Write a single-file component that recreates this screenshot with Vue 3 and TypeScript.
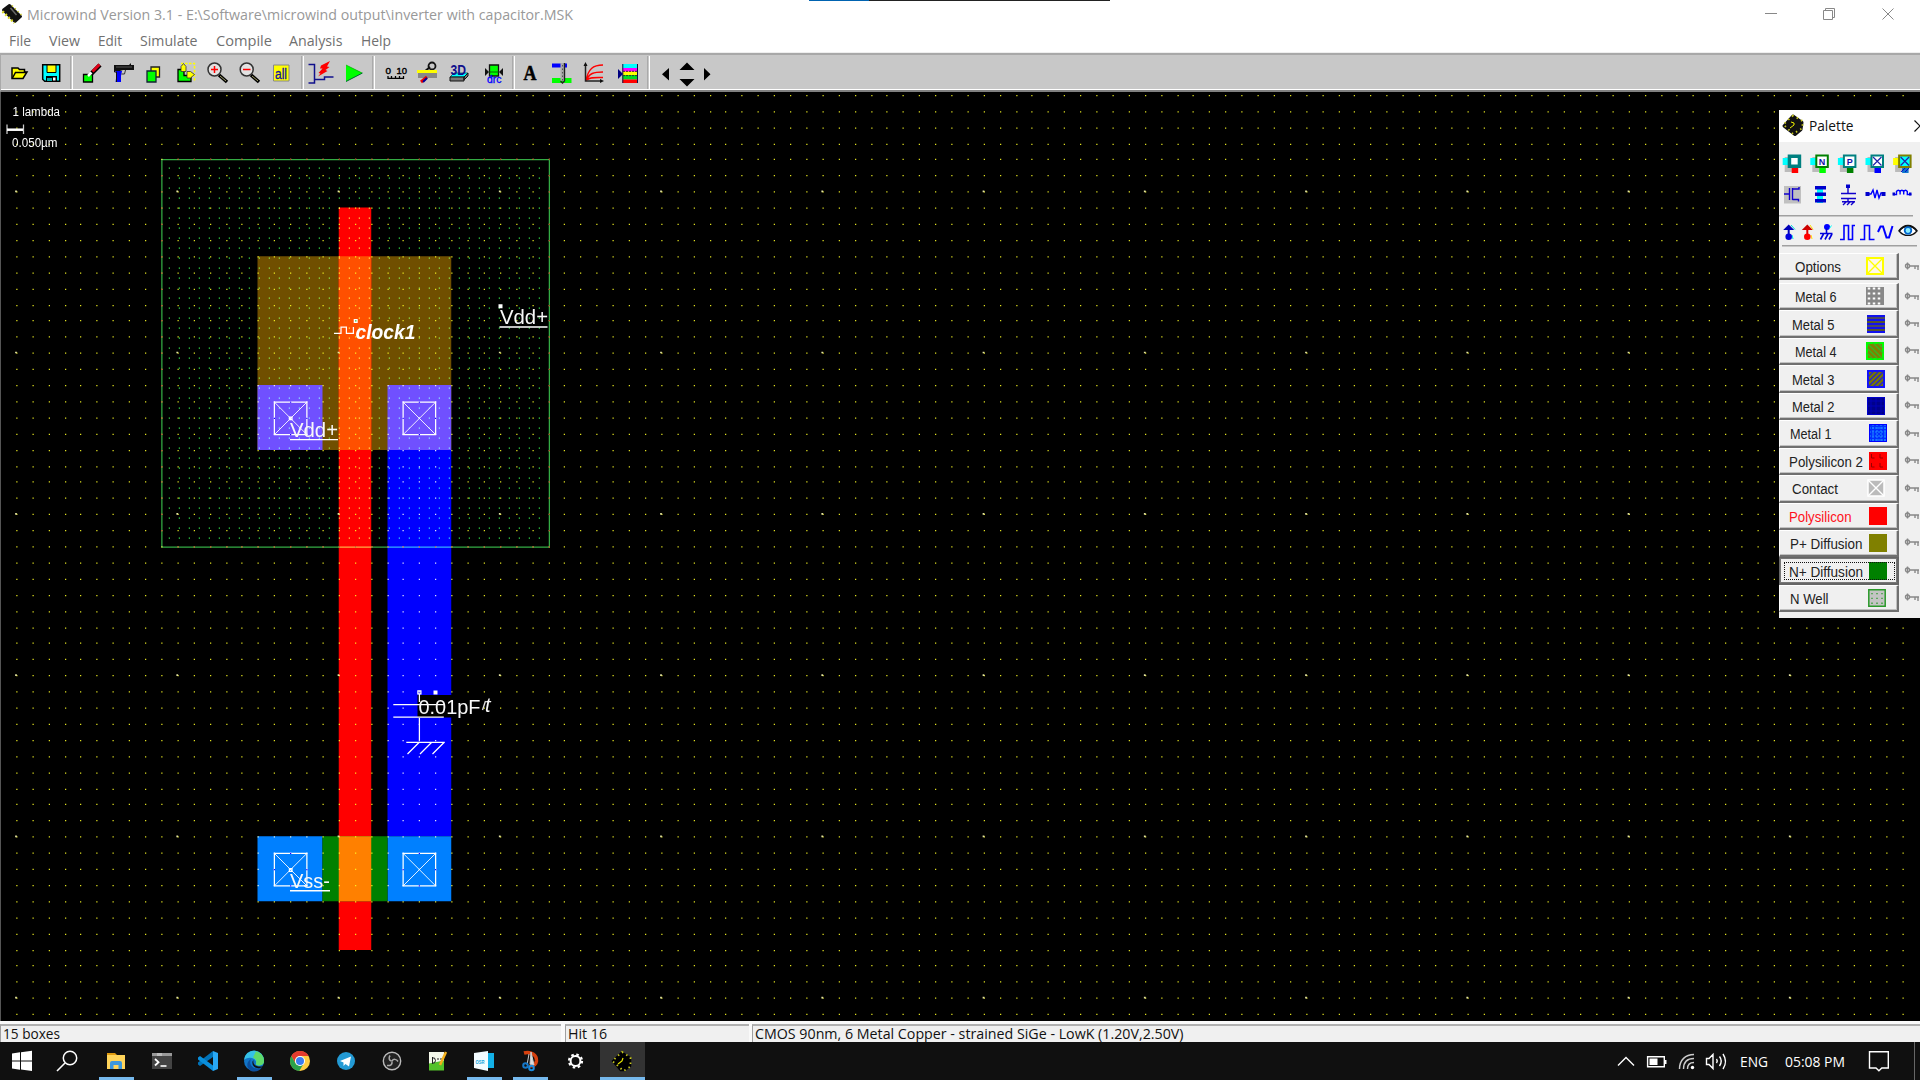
<script setup lang="ts">
import { h } from 'vue'

interface LabelProps {
  t: string
  w: number
  s?: number
  c?: string
  f?: string
  h?: number
  b?: number
}

// Single-line label drawn at an exact width
const Label = (p: LabelProps) =>
  h('svg', { width: p.w + 2, height: p.h ?? 20, style: 'display:block;overflow:visible;flex:none' }, [
    h(
      'text',
      {
        x: 0,
        y: p.b ?? 15,
        textLength: p.w,
        lengthAdjust: 'spacingAndGlyphs',
        'font-size': p.s ?? 14.5,
        'font-family': p.f ?? '"Open Sans", "Noto Sans", sans-serif',
        fill: p.c ?? '#111',
      },
      p.t,
    ),
  ])
Label.props = ['t', 'w', 's', 'c', 'f', 'h', 'b']

const arial = '"Liberation Sans", Arial, sans-serif'

const menus = [
  { t: 'File', x: 9, w: 22 },
  { t: 'View', x: 49, w: 31 },
  { t: 'Edit', x: 98, w: 24 },
  { t: 'Simulate', x: 140, w: 57.5 },
  { t: 'Compile', x: 215.5, w: 56 },
  { t: 'Analysis', x: 289, w: 53.5 },
  { t: 'Help', x: 360.5, w: 30 },
].map((m, i, a) => ({ ...m, gap: i ? m.x - a[i - 1].x - a[i - 1].w - 2 : m.x }))

const cols = Array.from({ length: 118 }, (_, k) => Math.floor(13.355 + 12.899 * k))
const rows = Array.from({ length: 58 }, (_, k) => Math.floor(76.355 + 12.899 * k))
const dots = (xs: number[], ys: number[], s = 1) =>
  ys.map((y) => xs.map((x) => `M${x} ${y}h${s}v${s}h-${s}z`).join('')).join('')
const gridPath = dots(cols, rows)
const majorPath = dots(
  Array.from({ length: 12 }, (_, k) => 12.1 + 129 * k),
  Array.from({ length: 6 }, (_, k) => 152.3 + 129 * k),
  1.4,
)
const wellPath = dots(
  Array.from({ length: 38 }, (_, k) => 135 + 8 * k),
  Array.from({ length: 38 }, (_, k) => 134 + 8 * k),
)
const edgeCols = cols.filter((x) => x > 129 && x < 440)
const edgeRows = rows.filter((y) => y > 127 && y < 437)
const wellEdge = dots(edgeCols, [127, 437]) + dots([129, 439], edgeRows)

const contacts = [
  [219.5, 321.7],
  [322.5, 321.7],
  [219.5, 682.7],
  [322.5, 682.7],
]

const layers = [
  { t: 'Metal 6', x: 1794.5, w: 41.5, sx: 1866, k: 'm6' },
  { t: 'Metal 5', x: 1791.5, w: 42.5, sx: 1867, k: 'm5' },
  { t: 'Metal 4', x: 1794.5, w: 41.5, sx: 1866, k: 'm4' },
  { t: 'Metal 3', x: 1791.5, w: 42.5, sx: 1867, k: 'm3' },
  { t: 'Metal 2', x: 1791.5, w: 42.5, sx: 1867, k: 'm2' },
  { t: 'Metal 1', x: 1790, w: 41.5, sx: 1869, k: 'm1' },
  { t: 'Polysilicon 2', x: 1788.5, w: 74, sx: 1869, k: 'p2' },
  { t: 'Contact', x: 1791.5, w: 46, sx: 1867, k: 'ct' },
  { t: 'Polysilicon', x: 1788.5, w: 62.5, sx: 1869, k: 'po', c: '#ff1020' },
  { t: 'P+ Diffusion', x: 1790, w: 72.5, sx: 1869, k: 'pd' },
  { t: 'N+ Diffusion', x: 1788.5, w: 74, sx: 1869, k: 'nd', active: true },
  { t: 'N Well', x: 1790, w: 38.5, sx: 1868, k: 'nw' },
]
</script>

<template>
  <div class="screen">
    <header class="title">
      <svg width="27" height="28" viewBox="0 0 27 28">
        <path d="M3.500 10 9.500 5.500 20.500 16.500 15 21.500z" fill="#111" stroke="#111" stroke-width="3" stroke-linejoin="round" />
        <path d="m10.500 8 6 7" stroke="#666" stroke-width="1.5" />
        <path d="M12 5.500l10 10" stroke="#c8c820" stroke-width="1.5" stroke-dasharray="1.300 2.700" fill="none" />
        <path d="M2.500 11.500l12 11.500" stroke="#d8d820" stroke-width="2.5" stroke-dasharray="1.800 2.200" fill="none" />
      </svg>
      <Label t="Microwind Version 3.1 - E:\Software\microwind output\inverter with capacitor.MSK" :w="546" :s="15" c="#999" :h="28" :b="20" />
      <svg class="controls" width="160" height="28" viewBox="1760 0 160 28" fill="none" stroke="#888" stroke-width="1">
        <path d="M1765 13.500h12M1823.500 10.500h9v9h-9zM1825.500 10.500v-2h9v9h-2M1882.500 8.500l11 11M1893.500 8.500l-11 11" />
      </svg>
      <div class="peek"><i></i></div>
    </header>

    <nav class="menu">
      <div v-for="m in menus" :key="m.t" :style="{ marginLeft: m.gap + 'px' }">
        <Label :t="m.t" :w="m.w" :s="14.5" c="#707070" :h="24" :b="18" />
      </div>
    </nav>

    <div class="toolbar">
      <svg width="34" height="35" viewBox="1 55 34 35">
        <path d="M12 68h6l1.500 1.500h5V72h2.500l-4 6.500H12z" fill="#ff0" stroke="#000" stroke-width="1.5" />
        <path d="M12.500 78 15.500 72.500h11" stroke="#000" stroke-width="1.5" fill="none" />
      </svg>
      <svg width="35" height="35" viewBox="35 55 35 35">
        <path d="M42.700 64.700h17v16.600h-15l-2-2z" fill="#0ff" stroke="#000" stroke-width="1.5" />
        <path d="M47 65h9v7.500h-9z" fill="#ff0" stroke="#000" />
        <path d="M46 76h11v5H46z" fill="#000" /><path d="M53 77.500h2.500v3H53z" fill="#fff" /><path d="M47 78h5v3h-5z" fill="#0aa" />
      </svg>
      <i class="sep"></i>
      <svg width="35" height="35" viewBox="73 55 35 35">
        <path d="M83.500 74.500h9v7.500h-9z" fill="#0f0" stroke="#000" stroke-width="1.3" />
        <path d="m91.500 73.500 8.500-8.500" stroke="#000" stroke-width="4.5" /><path d="m92.500 71.500 7-7" stroke="#e00018" stroke-width="3" />
        <path d="m88 76 3.500-3.500" stroke="#fff" stroke-width="2.5" />
      </svg>
      <svg width="33" height="35" viewBox="108 55 33 35">
        <path d="M114 65h15l2-2v2h3v5h-11l-3 1h-6z" fill="#111" />
        <path d="M115.500 71h6.500l-1 5v6h-5.500l1-7z" fill="#00f" /><path d="M114.500 69v3h2v10" fill="none" stroke="#111" /><path d="M121.500 74h3l1-4" stroke="#333" fill="none" /><path d="M116 67h16" stroke="#555" />
      </svg>
      <svg width="31" height="35" viewBox="141 55 31 35">
        <path d="M151 67h8.500v10H151z" fill="#ff0" stroke="#222" stroke-width="1.3" /><path d="M147 71h9v11h-9z" fill="#0f0" stroke="#123" stroke-width="1.3" />
      </svg>
      <svg width="29" height="35" viewBox="172 55 29 35">
        <path d="M181 63.500h13.500v17" fill="none" stroke="#ff0" stroke-width="1.5" stroke-dasharray="2.500 1.500" />
        <path d="M178 69.500h6v6h7v6h-13z" fill="#0f0" stroke="#000" stroke-width="1.3" />
        <path d="M183.500 63.500l2.500 3v5h-5v-5z" fill="#ff0" stroke="#333" stroke-width=".8" /><path d="M187 71.500h3.500l4 3-4 3.500h-3.500z" fill="#ff0" stroke="#333" stroke-width=".8" />
      </svg>
      <svg width="33" height="35" viewBox="201 55 33 35">
        <path d="m219 75 8 7" stroke="#000" stroke-width="3.5" /><path d="m220 76 6 5" stroke="#cc8" stroke-width=".8" />
        <circle cx="214.5" cy="69.5" r="6.5" fill="#e2e2e2" stroke="#333" stroke-width="1.5" />
        <path d="M211 69.500h7M214.500 66v7" stroke="#f00" stroke-width="1.5" />
      </svg>
      <svg width="33" height="35" viewBox="234 55 33 35">
        <path d="m251 75 8 7" stroke="#000" stroke-width="3.5" /><path d="m252 76 6 5" stroke="#cc8" stroke-width=".8" />
        <circle cx="246.7" cy="69.5" r="6.5" fill="#e2e2e2" stroke="#333" stroke-width="1.5" />
        <path d="M243 69.500h7.500" stroke="#f00" stroke-width="1.5" />
      </svg>
      <svg width="34" height="35" viewBox="267 55 34 35">
        <path d="M273.500 65h15.500v16h-15.500z" fill="#ff0" stroke="#888" />
        <text x="275" y="78.5" font-size="14" textLength="12" lengthAdjust="spacingAndGlyphs" font-family="Liberation Sans, sans-serif" fill="#1111a0" stroke="#1111a0" stroke-width=".3">all</text>
      </svg>
      <i class="sep"></i>
      <svg width="34" height="35" viewBox="304 55 34 35">
        <path d="M308.500 64.500h6v18.500h-6M314.500 79.500h10v-2.500h9" fill="none" stroke="#10108c" stroke-width="1.5" />
        <path d="m330 61-9 4.500-1 3 2.500 0-4 4.500 2 .5-2.500 3 9.500-5.500-2-1 4-3-2.500-.5z" fill="#f00" />
      </svg>
      <svg width="34" height="35" viewBox="338 55 34 35"><path d="M346 65v16.500l16.500-8.500z" fill="#0f0" /><path d="m346 65 16 8" stroke="#0a0" stroke-width=".7" /><path d="m346 81.500 16.500-8.500" stroke="#063" /></svg>
      <i class="sep"></i>
      <svg width="35" height="35" viewBox="375 55 35 35">
        <text x="385.5" y="74.3" font-size="9.5" textLength="5.5" lengthAdjust="spacingAndGlyphs" font-family="Liberation Sans, sans-serif" fill="#000" stroke="#000" stroke-width=".4">0</text>
        <text x="396.5" y="74.3" font-size="9.5" textLength="10.5" lengthAdjust="spacingAndGlyphs" font-family="Liberation Sans, sans-serif" fill="#000" stroke="#000" stroke-width=".4">10</text>
        <path d="M388 76v2.300h15.500V76M391.500 78v-2M395.500 78v-2M399.500 78v-2" fill="none" stroke="#000" stroke-width="1.3" />
      </svg>
      <svg width="32" height="35" viewBox="410 55 32 35">
        <circle cx="432" cy="66" r="3.5" fill="none" stroke="#111" stroke-width="1.8" /><path d="m430 67-6 5" stroke="#111" stroke-width="2" />
        <path d="M417 70h20v3h-20z" fill="#ff0" /><path d="M418 73h19v5h-19z" fill="#888" /><path d="m427 77-6 5" stroke="#e00" stroke-width="3" /><path d="m427 78-4 4" stroke="#009" stroke-width="2" />
      </svg>
      <svg width="34" height="35" viewBox="442 55 34 35">
        <path d="M450 77l4-4h14l-4 4z" fill="#0ff" stroke="#055" stroke-width=".8" /><path d="M450 77h14v4h-14zM464 77l4-4v3l-4 4z" fill="#777" stroke="#111" />
        <text x="450.5" y="75" font-size="15" textLength="15.5" lengthAdjust="spacingAndGlyphs" font-weight="700" font-family="Liberation Sans, sans-serif" fill="#10108c">3D</text>
      </svg>
      <svg width="36" height="35" viewBox="476 55 36 35">
        <path d="M489.500 65h9v11h-9z" fill="#0f0" stroke="#111" stroke-width="1.3" /><path d="M485 68v8l4-4zM503 68v8l-4-4z" fill="#111" /><path d="M489 72h10" stroke="#060" />
        <text x="487" y="82.5" font-size="10.5" textLength="14.5" lengthAdjust="spacingAndGlyphs" font-family="Liberation Sans, sans-serif" fill="#00f" stroke="#00f" stroke-width=".3">drc</text>
      </svg>
      <i class="sep"></i>
      <svg width="28" height="35" viewBox="515 55 28 35"><text x="523.5" y="80" font-size="20" textLength="13" lengthAdjust="spacingAndGlyphs" font-weight="700" font-family="Liberation Serif, serif" fill="#000" stroke="#000" stroke-width=".5">A</text></svg>
      <svg width="34" height="35" viewBox="543 55 34 35">
        <path d="M552 63.500h15v4h-15z" fill="#00f" /><path d="M552 78h19.500v5H552z" fill="#0f0" /><path d="M560.500 63h4v18h-4z" fill="#aaa" /><path d="M564.500 63v18l-2 2-2-2" fill="none" stroke="#222" stroke-width="1.4" /><path d="M562.500 65v16" stroke="#555" stroke-dasharray="1.500 2" />
      </svg>
      <svg width="35" height="35" viewBox="577 55 35 35">
        <path d="M586 81c2-12 7-16 17-16M586 81c3-8 8-9 17-9M587 80c3-3 8-2.500 16-2.500" fill="none" stroke="#f00" stroke-width="1.4" /><path d="M585.500 64v17H602" fill="none" stroke="#222" stroke-width="1.5" /><path d="M583.500 66l2-4 2 4zM600 79l4 2-4 2z" fill="#111" />
      </svg>
      <svg width="35" height="35" viewBox="612 55 35 35">
        <path d="M622.500 64h15v4h-15z" fill="#0ff" /><path d="M622.500 68h15v4h-15z" fill="#f0f" /><path d="M622.500 71.500h15v4h-15z" fill="#ff0" /><path d="M622.500 75h15v4.500h-15z" fill="#0d2" /><path d="M622.500 79.500h15v3.500h-15z" fill="#f00" />
        <path d="M622.800 64v19M637.500 64v19" stroke="#114" /><path d="M623 71.300h14M623 75.600h14" stroke="#333" stroke-dasharray="2 1" /><path d="M618 69v10l5-5z" fill="#000080" />
      </svg>
      <i class="sep"></i>
      <svg width="80" height="35" viewBox="650 55 80 35"><path d="M669 68v12.500l-7-6.200zM704 68v12.500l6.500-6.200zM679.500 70h15l-7.500-7.500zM679.500 79h15l-7.500 7.500z" fill="#000" /></svg>
    </div>

    <main class="workspace">
      <svg class="layout" width="1920" height="929" viewBox="0 92 1920 929">
        <rect y="92" width="1920" height="929" fill="#000" />
        <g transform="scale(1.25)">
          <path d="M206 205h155v155H206z" fill="#704f00" />
          <path d="M271 166h26v594h-26z" fill="#f00" />
          <path d="M271 205h26v155h-26z" fill="#ff5000" />
          <path d="M310 360h51v309h-51z" fill="#00f" />
          <path d="M206 308h52v52h-52zM310 308h51v52h-51z" fill="#7050ff" />
          <path d="M206 669h52v52h-52zM310 669h51v52h-51z" fill="#0080ff" />
          <path d="M258 669h52v52h-52z" fill="#008000" />
          <path d="M271 669h26v52h-26z" fill="#ff8000" />
          <path d="M129.500 127.700h310v310h-310z" fill="none" stroke="#34ac44" style="mix-blend-mode: screen" />
          <path :d="gridPath" fill="#e0e020" style="mix-blend-mode: screen" />
          <path :d="majorPath" fill="#e4e4a4" />
          <path :d="wellPath" fill="#30d848" style="mix-blend-mode: screen" />
          <path :d="wellEdge" fill="#a03a30" />
          <g v-for="(c, i) in contacts" :key="i" :transform="`translate(${c[0]} ${c[1]})`" fill="none" stroke="#fff">
            <path d="M0 0h26v26H0z" /><path d="m0 0 26 26M26 0 0 26" stroke-width=".7" />
            <path d="M12.500 0h1M12.500 26h1M-.5 13h1M25.500 13h1" stroke="#20f" />
          </g>
          <rect x="334" y="556" width="50" height="18" fill="#000" />
        </g>
        <g fill="none" stroke="#fff" stroke-width="1.25">
          <path d="M334 333.400h7v-6.300h5.400v6.300h7v-6.300" />
          <path d="M393.300 704.600h51M393.300 717h50.500M419.400 694v8M419.400 718v22M406.300 742.400h38.500M419 742.500l-11.500 11.500M431.500 742.500 420 754M444 742.500 432.500 754" />
          <path d="M499.500 327h48M290 439.600h48M290 890.700h40" stroke-width="1.4" />
          <path d="M417.900 690.900h3v3h-3zM289.400 417h2.600v2.600h-2.600zM289.400 868.700h2.600v2.600h-2.600z" />
        </g>
        <path d="M433.500 690.500h4v4h-4zM353.700 319h4v4h-4zM498.500 304.200h4v4h-4z" fill="#fff" />
        <path d="M355.200 320.300h1.200v1.200h-1.200z" fill="#0a0" />
        <g fill="#f8f8f8" font-family="Liberation Sans, Arial, sans-serif" font-size="20">
          <text x="355.5" y="338.7" textLength="60" lengthAdjust="spacingAndGlyphs" font-weight="700" font-style="italic" fill="#fff">clock1</text>
          <text x="500" y="324" textLength="48" lengthAdjust="spacingAndGlyphs">Vdd+</text>
          <text x="290" y="436.5" textLength="48" lengthAdjust="spacingAndGlyphs">Vdd+</text>
          <text x="290" y="888" textLength="40" lengthAdjust="spacingAndGlyphs">Vss-</text>
          <text x="418.5" y="713.8" textLength="62" lengthAdjust="spacingAndGlyphs">0.01pF</text>
          <text x="485" y="711.5" font-style="italic" font-size="20">t</text>
          <path d="m482.500 710 3-9" stroke="#ddd" stroke-width="1.4" />
          <text x="12.5" y="115.6" font-size="12" textLength="47.5" lengthAdjust="spacingAndGlyphs" fill="#fff">1 lambda</text>
          <text x="12" y="146.6" font-size="12" textLength="45.5" lengthAdjust="spacingAndGlyphs" fill="#fff">0.050µm</text>
        </g>
        <path d="M7 124.500v9.500M23.500 124.500v9.500" stroke="#ccc" stroke-width="1.25" /><path d="M7 129.700h16" stroke="#fff" stroke-width="2.5" />
      </svg>

      <aside class="palette">
        <div class="ptitle">
          <svg width="30" height="32" viewBox="1779 110 30 32">
            <path d="m1793 116 9 6.500-1 7-6 5-11-8.500z" fill="#111" stroke="#111" stroke-width="3" stroke-linejoin="round" />
            <path d="m1793 115.500-9.500 9 9.500 9.500 9.500-6v-7z" fill="none" stroke="#c8c820" stroke-width="1.8" stroke-dasharray="1.500 3.500" />
            <path d="m1790 128 4-3v-2l-3-1" stroke="#ee0" stroke-width="1" fill="none" />
          </svg>
          <Label t="Palette" :w="44.5" :s="15" c="#111" :h="32" :b="20.5" />
          <svg class="pclose" width="12" height="32" viewBox="1908 110 12 32"><path d="m1914.500 120.500 11 11M1925.500 120.500l-11 11" stroke="#111" stroke-width="1.2" /></svg>
        </div>
        <svg width="141" height="71" viewBox="1779 142 141 71">
          <g v-for="(g, i) in [['#0ff', '#008080', '#f00'], ['#0ff', '#008000', '#0f0'], ['#0ff', '#008080', '#008000'], ['#0ff', '#008080', '#00f'], ['#ff0', '#808000', '#17c']]" :key="i" :transform="`translate(${1782.7 + 27.6 * i} 154)`">
            <path d="M2 3h13v15H2z" fill="#bbb" /><path d="M0 4h6v7H0z" :fill="g[0]" /><path d="M9 13h6.500v6H9z" :fill="g[2]" />
            <path d="M5 .5h13.500v13.500H5z" :fill="g[1]" />
            <path v-if="i === 0" d="M8.500 4h6.500v6.500H8.500z" fill="#fff" />
            <path v-else d="M7 2.500h9.500v9.500H7z" :fill="i === 4 ? '#0ff' : '#fff'" />
            <path v-if="i > 2" d="m7.500 3 8.500 8.500M16 3l-8.500 8.500" stroke="#22a" stroke-width="1.2" />
            <text v-if="i === 1" x="8.5" y="10.5" font-size="9" font-weight="700" font-family="Liberation Sans, sans-serif" fill="#11a">N</text>
            <text v-if="i === 2" x="8.8" y="10.5" font-size="9" font-weight="700" font-family="Liberation Sans, sans-serif" fill="#11a">P</text>
            <path v-if="i === 4" d="m8 18 4-4M12 18l4-4" stroke="#00c" />
          </g>
          <path d="M1784 186h17v17.500h-17z" fill="#c0c0c0" />
          <g fill="none" stroke="#10c" stroke-width="1.4">
            <path d="M1784 194h5.500M1789.500 188v12M1792.500 188v12M1799 187v2h-6M1792.500 199.500h6v2" />
            <path d="M1848 186v7M1841 193.500h15M1841 198.500h15M1848 198.500v4M1842 201.700h13M1846 202l-3 3M1850 202l-3 3M1854 202l-3 3" />
            <path d="M1867 194h4l2-4 2 8 2-8 2 8 2-5h4" stroke="#00f" /><path d="M1893 194.500h3.500v-3q1.800-2.500 3.600 0v3-3q1.800-2.500 3.600 0v3-3q1.800-2.500 3.600 0v3h4" stroke="#00f" />
          </g>
          <path d="M1817 187h6v16h-6z" fill="#0ff" /><path d="M1815 186h11v3.500h-11zM1815 192.500h11v3.500h-11zM1815 199h11v3.500h-11zM1846 184.500h4v3.500h-4zM1865.500 192h4v4h-4zM1881.500 192h4v4h-4zM1892.500 192.500h2.500v3h-2.500zM1909 192.500h2.500v3h-2.500z" fill="#00c" />
        </svg>
        <i class="rule first"></i>
        <svg width="141" height="29" viewBox="1779 217 141 29">
          <path d="M1791 225l4 4.500M1792 235l1 4" stroke="#0dd" />
          <path d="m1788.700 224.500 5.500 5.500h-11z" fill="#0000b8" /><path d="M1788.700 228v10" stroke="#0000b8" stroke-width="2" /><circle cx="1788.7" cy="236.7" r="3.3" fill="#00d" />
          <path d="M1810 225l3 4.500M1811 235l1 4" stroke="#fd0" />
          <path d="m1807.300 224.500 5.500 5.500h-11z" fill="#c00" /><path d="M1807.300 228v10" stroke="#d00" stroke-width="2" /><circle cx="1807.3" cy="236.7" r="3.3" fill="#f00" />
          <circle cx="1827" cy="227" r="3" fill="#00f" /><path d="M1829.500 228.500l2-3" stroke="#0ff" /><path d="M1826.500 228v6M1820 233.500h12.500M1823.500 234l-3 5.500M1828 234l-3 5.500M1832 234l-3 5.500" stroke="#00d" stroke-width="1.6" fill="none" />
          <g fill="none" stroke="#00f" stroke-width="1.6"><path d="M1840 239.500h4v-14h4.500v14h4v-14h2.500" /><path d="M1860 239.500h4.500v-14h5v14h5" /><path d="M1878 232l2.500-5.500h2.500l3.500 11h2.500l3.500-11.500" stroke-width="2" /></g>
          <path d="M1899 231c5-6 13-6 18 0-5 6-13 6-18 0z" fill="#fff" stroke="#111" stroke-width="1.2" /><path d="M1899 231c5-7 13-7 18 0" fill="none" stroke="#111" stroke-width="1.8" /><circle cx="1908" cy="230.5" r="3.3" fill="#8ef" stroke="#06c" stroke-width="1.8" />
        </svg>
        <i class="rule second"></i>
        <div class="row options">
          <div class="btn">
            <div :style="{ width: '14.5px' }"></div>
            <Label t="Options" :w="46" :s="14" c="#222" :f="arial" :h="22" :b="16.8" />
            <svg class="swatch" width="18" height="18" viewBox="0 0 18 18" :style="{ marginRight: '13.5px' }"><path d="M1 1h16v16H1z" fill="#fff8e8" stroke="#ff0" stroke-width="2" /><path d="m1 1 16 16M17 1 1 17" stroke="#ff0" stroke-width="1.3" /></svg>
          </div>
          <svg class="key" width="16" height="10" viewBox="0 0 16 10"><circle cx="3.5" cy="5" r="2" fill="none" stroke="#888" stroke-width="1.4" /><path d="M5.500 5h9.500M11 5v3M14 5v4M3.500 1.500v7" stroke="#888" stroke-width="1.4" /></svg>
        </div>
        <div v-for="l in layers" :key="l.t" class="row">
          <div class="btn" :class="{ active: l.active }">
            <i v-if="l.active" class="focus"></i>
            <div :style="{ width: l.x - 1780 + 'px', flex: 'none' }"></div>
            <Label :t="l.t" :w="l.w" :s="14" :c="l.c ?? '#222'" :f="arial" :h="22" :b="16.8" />
            <svg class="swatch" width="18" height="18" viewBox="0 0 18 18" :style="{ marginRight: 1897 - l.sx - 18 + 'px' }">
              <template v-if="l.k === 'm6'"><path d="M0 0h18v18H0z" fill="#888" /><path d="M3 .5v18M8 .5v18M13 .5v18" stroke="#fff" stroke-width="2.5" stroke-dasharray="2 3" /></template>
              <template v-else-if="l.k === 'm5'"><path d="M0 0h18v18H0z" fill="#4a4a60" /><path d="M0 1h18M0 5h18M0 9h18M0 13h18M0 17h18" stroke="#11e" stroke-width="1.8" /><path d="M0 7h18M0 15h18" stroke="#606000" /></template>
              <template v-else-if="l.k === 'm4'"><path d="M1 1h16v16H1z" fill="#808000" stroke="#0f0" stroke-width="2" /><path d="m1 11 6 6M1 6l11 11M2 2l15 15M7 1l10 10M12 1l5 5" stroke="#3b2" stroke-width="1.2" /></template>
              <template v-else-if="l.k === 'm3'"><path d="M1 1h16v16H1z" fill="#777700" stroke="#11f" stroke-width="2" /><path d="m1 7 6-6M1 12 12 1M1 17 17 1M6 17 17 6M11 17l6-6" stroke="#22c" stroke-width="1.2" /></template>
              <template v-else-if="l.k === 'm2'"><path d="M0 0h18v18H0z" fill="#00008b" /><path d="M0 4h18M0 9h18M0 14h18M4 0v18M9 0v18M14 0v18" stroke="#0000b8" /><path d="M.5.5h17v17H.5z" fill="none" stroke="#00c" /></template>
              <template v-else-if="l.k === 'm1'"><path d="M0 0h18v18H0z" fill="#0030ff" /><path d="M0 4h18M0 8h18M0 12h18M0 16h18M4 0v18M8 0v18M12 0v18M16 0v18" stroke="#2090ff" stroke-dasharray="2 1" /><path d="M.5.5h17v17H.5z" fill="none" stroke="#00f" /></template>
              <template v-else-if="l.k === 'p2'"><path d="M0 0h18v18H0z" fill="#f00" /><path d="M2.500 2v4h3M11 2v4h3M2.500 11v4h3M11 11v4h3" stroke="#900" fill="none" /></template>
              <template v-else-if="l.k === 'ct'"><path d="M1 1h16v16H1z" fill="#bbb" stroke="#fff" stroke-width="1.5" /><path d="m1 1 16 16M17 1 1 17" stroke="#fff" stroke-width="1.4" /></template>
              <path v-else-if="l.k === 'po'" d="M0 0h18v18H0z" fill="#f00" />
              <path v-else-if="l.k === 'pd'" d="M0 0h18v18H0z" fill="#808000" />
              <path v-else-if="l.k === 'nd'" d="M0 0h18v18H0z" fill="#008000" />
              <template v-else><path d="M.8.800h16.400v16.400H.8z" fill="#c4c4c4" stroke="#2a9a2a" stroke-width="1.5" /><path d="M4 4v12M9 4v12M14 4v12" stroke="#2a9a2a" stroke-width="1.3" stroke-dasharray="1.3 3.5" /></template>
            </svg>
          </div>
          <svg class="key" width="16" height="10" viewBox="0 0 16 10"><circle cx="3.5" cy="5" r="2" fill="none" stroke="#888" stroke-width="1.4" /><path d="M5.500 5h9.500M11 5v3M14 5v4M3.500 1.500v7" stroke="#888" stroke-width="1.4" /></svg>
        </div>
      </aside>
    </main>

    <footer class="status">
      <div class="cell a"><Label t="15 boxes" :w="57" :s="14.5" :h="18" :b="15" /></div>
      <div class="cell b"><Label t="Hit 16" :w="39" :s="14.5" :h="18" :b="15" /></div>
      <div class="cell c"><Label t="CMOS 90nm, 6 Metal Copper - strained SiGe - LowK (1.20V,2.50V)" :w="428.5" :s="14.5" :h="18" :b="15" /></div>
    </footer>

    <div class="taskbar">
      <svg width="45" height="38" viewBox="0 1042 45 38"><path d="M12 1053.500l8-1.200v8.200h-8zM21 1052.200l11-1.500v9.800H21zM12 1061.500h8v8.200l-8-1.200zM21 1061.500h11v9.500l-11-1.400z" fill="#fff" /></svg>
      <svg width="46" height="38" viewBox="45 1042 46 38"><circle cx="70" cy="1058" r="6.7" fill="none" stroke="#fff" stroke-width="1.5" /><path d="m65 1063-8 8" stroke="#fff" stroke-width="1.6" /></svg>
      <svg width="46" height="38" viewBox="93 1042 46 38"><path d="M107 1053h8l2 2h-10z" fill="#e09b10" /><path d="M107 1055h18v14h-18z" fill="#ffd45a" /><path d="M110 1069v-6q0-2 2-2h8q2 0 2 2v6h-3.500v-4h-5v4z" fill="#3c97dd" /><path d="M99 1077h35v3h-35z" fill="#76b9ed" /></svg>
      <svg width="46" height="38" viewBox="139 1042 46 38"><path d="M152 1053h20v16h-20z" fill="#444" /><path d="M152 1053h20v3h-20z" fill="#999" /><path d="M157 1053h5v3h-5z" fill="#bbb" /><path d="m155 1059 3.500 3.200-3.500 3.300" fill="none" stroke="#fff" stroke-width="1.8" /><path d="M160.500 1066h6" stroke="#fff" stroke-width="1.6" /></svg>
      <svg width="46" height="38" viewBox="185 1042 46 38"><path d="m213 1051 5 2v16l-5 2z" fill="#29a8f5" /><path d="M213 1051v6l-13 9-2-1.500v-2z" fill="#0072b8" /><path d="m198 1057.500 2-1.500 13 9.500v5.500l-15-11.500z" fill="#0a8fdc" /></svg>
      <svg width="46" height="38" viewBox="231 1042 46 38"><circle cx="254" cy="1061" r="10" fill="#1175c8" /><path d="M244 1060a10 10 0 0 1 20 1c0 3-2.500 4.500-5.500 4.500-2 0-3-1-2.500-2 1.500-5-7-8-12-3.500z" fill="#35c1e8" /><path d="M256 1051.200a10 10 0 0 1 8 10c0 3-2.500 4.300-5.500 4.300-2 0-3-1-2.500-2 1-3-1-5-3-6z" fill="#5fda6a" /><path d="M251 1059c-3 6 3 12 11 8.500a10 10 0 0 1-11 3.500c-5-3-5-9 0-12z" fill="#0c4f9e" /><path d="M253.500 1060c-1 5 3 7 9 6.500l-1 1c-5 2-10-1-9-6z" fill="#111" /><path d="M237 1077h35v3h-35z" fill="#76b9ed" /></svg>
      <svg width="46" height="38" viewBox="277 1042 46 38"><circle cx="300" cy="1061" r="10" fill="#ffcd40" /><path d="M291.300 1056a10 10 0 0 1 17.400 0H300a5 5 0 0 0-4.300 7.500z" fill="#e33b2e" /><path d="M291.300 1056a10 10 0 0 0 8 15l4.700-8a5 5 0 0 1-8.300.5z" fill="#2ba24c" /><circle cx="300" cy="1061" r="5" fill="#fff" /><circle cx="300" cy="1061" r="4" fill="#3a7df0" /></svg>
      <svg width="46" height="38" viewBox="323 1042 46 38"><circle cx="346" cy="1061" r="9" fill="#239ad4" /><path d="m340 1061 11-4.500-2 10-3.500-2.500-2 2v-3.500z" fill="#fff" /></svg>
      <svg width="46" height="38" viewBox="369 1042 46 38"><circle cx="392" cy="1061" r="8.7" fill="#222" stroke="#bbb" stroke-width="1.4" /><path d="M391.500 1061c-2.500-.5-3-3-1.500-5.500M392 1061c1.500-2.500 4.500-2 6 .5M392 1061.500c.5 3-1.500 4.500-5 4" fill="none" stroke="#aaa" stroke-width="1.5" /></svg>
      <svg width="46" height="38" viewBox="415 1042 46 38"><path d="M429 1052h15v18h-15z" fill="#f4f8ea" /><path d="M429 1063.500l15-3v10h-15z" fill="#54c22a" /><path d="M432.500 1057v7M433 1058h1.500q2 2.500 0 5H433M438 1058v2M441 1058v2" stroke="#222" fill="none" /><path d="m446 1052-6 13" stroke="#f3b01c" stroke-width="2.5" /></svg>
      <svg width="46" height="38" viewBox="461 1042 46 38"><path d="M482 1053h12v15h-12z" fill="#13b1e7" /><path d="m474 1053 14-2v20l-14-3z" fill="#f4fcff" /><text x="475.5" y="1063.5" font-size="6" font-weight="700" textLength="9" lengthAdjust="spacingAndGlyphs" font-family="Liberation Sans, sans-serif" fill="#13a3dc">OSR</text><path d="M467 1077h35v3h-35z" fill="#76b9ed" /></svg>
      <svg width="46" height="38" viewBox="507 1042 46 38"><path d="M524 1053c7-2 13 2 12.500 8-.5 4-4 5-7 5" fill="none" stroke="#d8410f" stroke-width="3.5" /><path d="m531 1052 3 13-4-1zM529 1054l-2 11" fill="#ddd" stroke="#ccc" /><circle cx="525.5" cy="1065.5" r="2.3" fill="none" stroke="#1678c8" stroke-width="2" /><circle cx="531.5" cy="1068" r="2.3" fill="none" stroke="#1b8cdf" stroke-width="2" /><path d="M513 1077h35v3h-35z" fill="#76b9ed" /></svg>
      <svg width="47" height="38" viewBox="553 1042 47 38"><circle cx="575.5" cy="1061" r="4.9" fill="none" stroke="#fff" stroke-width="2" /><circle cx="575.5" cy="1061" r="6.5" fill="none" stroke="#fff" stroke-width="2.2" stroke-dasharray="2.553 2.553" /></svg>
      <svg width="45" height="38" viewBox="600 1042 45 38"><path d="M600 1042h45v38h-45z" fill="#333" /><path d="m622 1052 8.500 6v8l-6 4.500h-4l-8-9.500z" fill="#000" stroke="#000" stroke-width="1.5" /><path d="m622 1052 8.500 5.500v9l-7 4.500-11-10z" fill="none" stroke="#c8c820" stroke-width="1.8" stroke-dasharray="1.500 3.500" /><path d="m618 1064 4-3 1-3" stroke="#ee0" fill="none" stroke-width="1.2" /><path d="M600 1077h45v3h-45z" fill="#76b9ed" /></svg>
      <div class="tray">
        <svg width="122" height="38" viewBox="1615 1042 122 38" fill="none" stroke="#fff" stroke-width="1.4">
          <path d="m1618 1065.500 8-8 8 8" /><path d="M1647.600 1056.700h16.700v10h-16.700z" /><path d="M1649.500 1058.500h8v6.500h-8zM1665 1060h1.500v4h-1.500z" fill="#fff" stroke="none" />
          <path d="M1679.500 1069c0-9 6-14.500 14.500-14.500M1683.500 1069c0-7 4-10.500 10.500-10.500M1687.500 1069c0-4 2-6.500 6.500-6.500" stroke="#ccc" /><circle cx="1692.5" cy="1067.5" r="1.7" fill="#fff" stroke="none" />
          <path d="M1706.500 1058.500h2.500l4-4v14l-4-4h-2.500zM1716.500 1059q1.500 2 0 4M1719.500 1056.500q3.500 4.500 0 9.500M1723 1054q5 7.500 0 15" />
        </svg>
        <div class="lang"><Label t="ENG" :w="28" :s="14.5" c="#fff" :h="38" :b="24.5" /></div>
        <div class="clock"><Label t="05:08 PM" :w="60" :s="14.5" c="#fff" :h="38" :b="24.5" /></div>
        <svg width="60" height="38" viewBox="1860 1042 60 38" fill="none" stroke="#fff" stroke-width="1.4"><path d="M1869.500 1051.700h18.800v16.300h-6.500l-2.900 2.700-2.900-2.700h-6.500z" /><path d="M1914.500 1042v38" stroke="#666" stroke-width="1" /></svg>
      </div>
    </div>
  </div>
</template>

<style>
body { margin: 0; overflow: hidden; background: #000; }
</style>

<style scoped>
.screen { width: 1920px; height: 1080px; display: flex; flex-direction: column; overflow: hidden; background: #fff; }
svg { display: block; flex: none; }
.title { height: 28px; display: flex; position: relative; }
.controls { margin-left: auto; }
.peek { position: absolute; top: 0; left: 809px; width: 301px; height: 1px; background: #222; }
.peek i { display: block; width: 60px; height: 1px; background: #0063b1; }
.menu { height: 25px; display: flex; box-shadow: inset 0 -1px #eee; }
.toolbar { box-sizing: border-box; height: 39px; display: flex; background: #c8c8c8; border-top: 2px solid #a8a8a8; border-left: 1px solid #aaa; border-bottom: 2px solid #808080; box-shadow: inset 0 -1px #fff; }
.sep { flex: none; box-sizing: border-box; width: 3px; height: 33px; margin: 1px 0; border-left: 1px solid #aaa; border-right: 1px solid #fff; }
.workspace { height: 929px; position: relative; }
.workspace::before { content: ''; position: absolute; z-index: 1; left: 0; top: 0; width: 1px; height: 929px; background: #555; }
.layout { isolation: isolate; }
.palette { position: absolute; left: 1779px; top: 18px; width: 141px; height: 508px; background: #f0f0f0; overflow: hidden; display: flex; flex-direction: column; }
.ptitle { height: 32px; display: flex; background: #fff; }
.pclose { margin-left: auto; }
.rule { flex: none; height: 2px; background: linear-gradient(#a0a0a0 50%, #c8c8c8 50%); }
.rule.first { margin: 2px 7px 0 0; }
.rule.second { margin: -1px 3px 6px 3px; }
.row { height: 27.45px; flex: none; display: flex; }
.row.options { height: 30px; }
.btn { box-sizing: border-box; position: relative; width: 120.7px; height: 27.45px; display: flex; align-items: center; background: #f0f0f0; border: 1px solid #fff; border-right: 2px solid #707070; border-bottom: 2px solid #707070; box-shadow: inset -1px -1px #c0c0c0; }
.btn.active { box-shadow: inset 0 0 0 1px #777; border-color: #666; }
.focus { position: absolute; left: 4px; top: 4px; right: 2px; bottom: 3px; border: 1px dotted #111; }
.swatch { margin-left: auto; }
.key { margin: 7.5px 0 0 4.8px; }
.status { height: 21px; display: flex; background: #fafafa; }
.cell { box-sizing: border-box; margin-top: 3px; height: 18px; background: #f0f0f0; border-left: 1px solid #a0a0a0; border-top: 2px solid #b0b0b0; padding-left: 2px; }
.cell > svg { margin-top: -2px; }
.a { width: 561px; }
.b { width: 184px; margin-left: 4px; }
.c { flex: 1; margin-left: 3px; }
.taskbar { height: 38px; display: flex; background: #101010; }
.taskbar > svg:nth-child(2) { margin-right: 2px; }
.tray { margin-left: auto; display: flex; }
.lang { margin-left: 2.5px; width: 45px; }
.clock { width: 75.5px; }
</style>
